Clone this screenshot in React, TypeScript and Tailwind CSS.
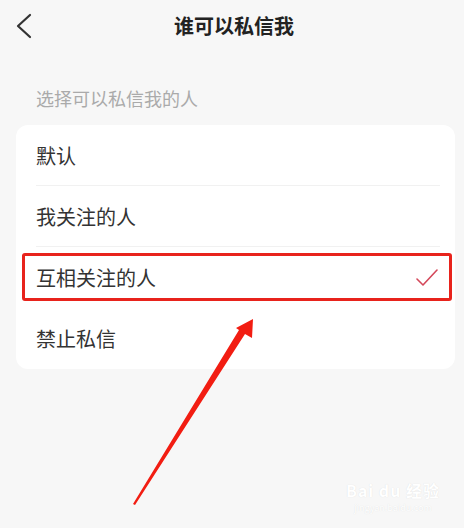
const rows = ["默认", "我关注的人", "互相关注的人", "禁止私信"];

function BackIcon() {
  return (
    <svg width="16" height="28" viewBox="0 0 16 28" fill="none">
      <polyline points="14,2 2,13 14,24" stroke="#333" strokeWidth="2.2" strokeLinecap="round" strokeLinejoin="round" />
    </svg>
  );
}

function Check() {
  return (
    <svg width="22" height="18" viewBox="0 0 22 18" fill="none">
      <polyline points="1,10 7,16 21,1" stroke="#d4485a" strokeWidth="1.6" strokeLinecap="round" strokeLinejoin="round" />
    </svg>
  );
}

function Arrow() {
  return (
    <svg className="absolute left-0 top-0 pointer-events-none" width="464" height="528" viewBox="0 0 464 528">
      <polygon
        points="253,319 252,338 245,334 135,505 133,504 239,330 236,328"
        fill="#f21d12"
      />
    </svg>
  );
}

function App() {
  return (
    <div
      className="relative w-full min-h-[528px] bg-[#f7f7f7] overflow-hidden"
      style={{ fontFamily: '"Noto Sans CJK SC", "Noto Sans", sans-serif' }}
    >
      <div className="grid grid-cols-[48px_1fr_48px] items-center h-[52px]">
        <div className="pl-4 pt-[1px]">
          <BackIcon />
        </div>
        <p className="text-center text-[20px] font-bold text-[#222] pl-1">谁可以私信我</p>
        <div />
      </div>

      <p className="mt-[34px] mb-[15px] pl-9 text-[18px] leading-[24px] text-[#aaaaaa]">选择可以私信我的人</p>

      <div className="ml-4 mr-[9px] bg-white rounded-[12px]">
        {rows.map((r, i) => (
          <div key={r} className="relative flex items-center h-[61px] pl-5 pr-[17px]">
            <p className="flex-1 text-[20px] text-[#333]">{r}</p>
            {i === 2 && <Check />}
            {i < 2 && <div className="absolute left-5 right-[15px] bottom-0 h-[1px] bg-[#f1f1f1]" />}
            {i === 2 && (
              <div className="absolute left-[6px] right-[3px] top-[6px] bottom-[7px] border-[3px] border-[#e8231c] rounded-[3px]" />
            )}
          </div>
        ))}
      </div>

      <Arrow />

      <div className="absolute left-[346px] top-[480px] flex flex-col items-center gap-[2px] text-white [text-shadow:0_0_1px_rgba(0,0,0,0.12)]">
        <p className="text-[16px] font-bold leading-[20px] tracking-[1px]">Bai du 经验</p>
        <p className="text-[9px] leading-[11px]">jingyan.baidu.com</p>
      </div>
    </div>
  );
}

export default App;
